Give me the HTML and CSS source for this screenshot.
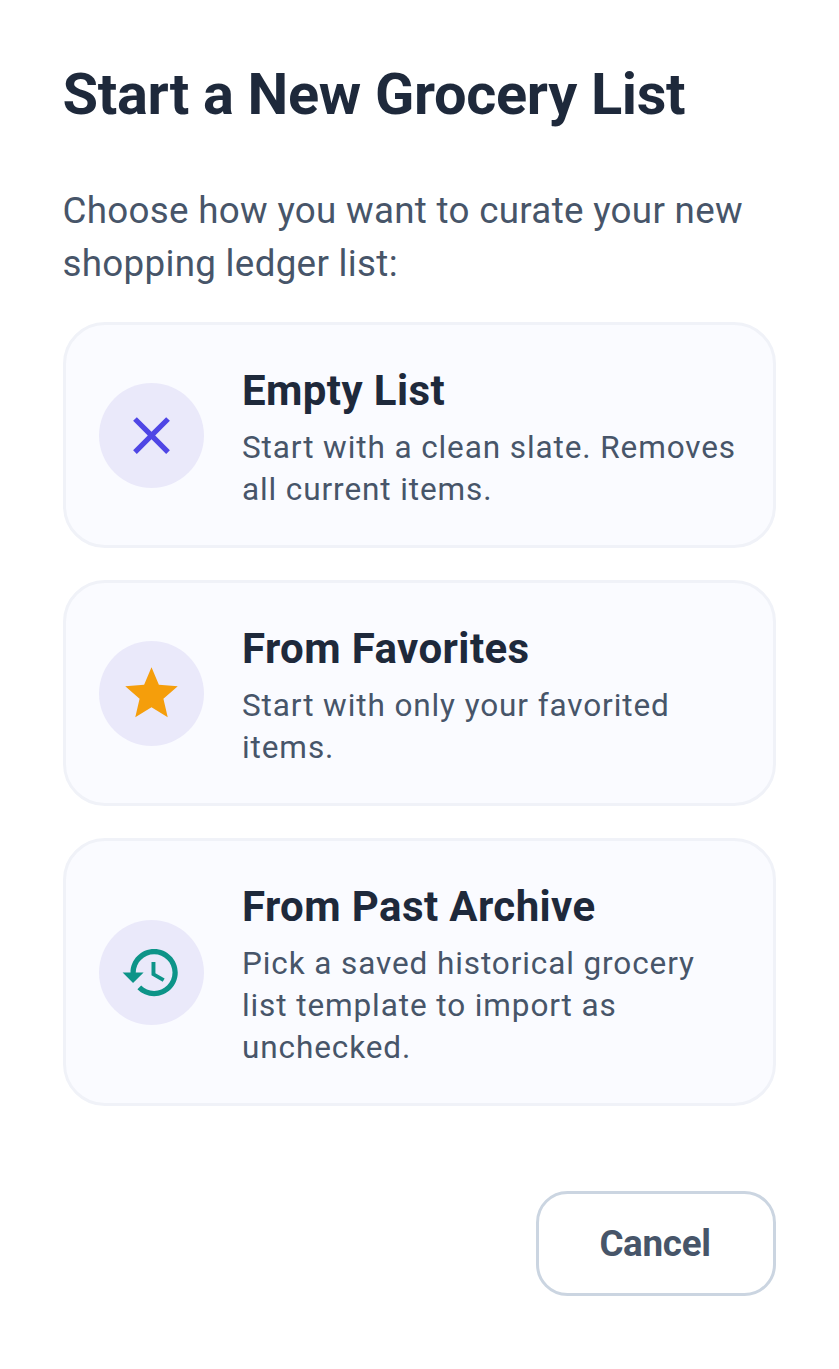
FILE: index.html
```html
<!DOCTYPE html>
<html lang="en">

<head>
    <meta charset="UTF-8">
    <meta name="viewport" content="width=device-width, initial-scale=1.0">
    <title>Start a New Grocery List</title>
    <link rel="stylesheet" href="styles.css">
</head>

<body>
<div class="dialog">
    <h1 class="dialog-title">Start a New Grocery List</h1>
    <p class="dialog-intro">Choose how you want to curate your new shopping ledger list:</p>

    <div class="options">
        <div class="option">
            <div class="option-icon">
                <svg class="icon-close" viewBox="0 0 24 24"><path d="M19 6.41L17.59 5 12 10.59 6.41 5 5 6.41 10.59 12 5 17.59 6.41 19 12 13.41 17.59 19 19 17.59 13.41 12z"/></svg>
            </div>
            <div class="option-text">
                <h2 class="option-title">Empty List</h2>
                <p class="option-desc">Start with a clean slate. Removes all current items.</p>
            </div>
        </div>

        <div class="option">
            <div class="option-icon">
                <svg class="icon-star" viewBox="0 0 24 24"><path d="M12 17.27L18.18 21l-1.64-7.03L22 9.24l-7.19-.61L12 2 9.19 8.63 2 9.24l5.46 4.73L5.82 21z"/></svg>
            </div>
            <div class="option-text">
                <h2 class="option-title">From Favorites</h2>
                <p class="option-desc">Start with only your favorited items.</p>
            </div>
        </div>

        <div class="option">
            <div class="option-icon">
                <svg class="icon-history" viewBox="0 0 24 24"><path d="M13 3c-4.97 0-9 4.03-9 9H1l3.89 3.89.07.14L9 12H6c0-3.87 3.13-7 7-7s7 3.13 7 7-3.13 7-7 7c-1.93 0-3.68-.79-4.94-2.06l-1.42 1.42C8.27 19.99 10.51 21 13 21c4.97 0 9-4.03 9-9s-4.03-9-9-9zm-1 5v5l4.28 2.54.72-1.21-3.5-2.08V8H12z"/></svg>
            </div>
            <div class="option-text">
                <h2 class="option-title">From Past Archive</h2>
                <p class="option-desc">Pick a saved historical grocery list template to import as unchecked.</p>
            </div>
        </div>
    </div>

    <div class="dialog-actions">
        <button class="cancel-btn" type="button">Cancel</button>
    </div>
</div>
</body>

</html>
```

FILE: styles.css
```css
body {
    margin: 0;
    background: #fff;
    font-family: Roboto, "Noto Sans", sans-serif;
}

.dialog {
    padding: 63px 63px 0 63px;
}

.dialog-title {
    margin: 0 0 0 -0.5px;
    font-size: 57.75px;
    line-height: 63px;
    font-weight: 700;
    letter-spacing: -0.33px;
    color: #1e293b;
}

.dialog-intro {
    margin: 58px 0 0 -0.5px;
    font-size: 36.75px;
    line-height: 53px;
    letter-spacing: 0.3px;
    color: #475569;
}

.options {
    display: flex;
    flex-direction: column;
    gap: 32px;
    margin-top: 32px;
}

.option {
    display: flex;
    align-items: center;
    gap: 38px;
    padding: 0 33px;
    border: 3px solid #f0f2f8;
    border-radius: 42px;
    background: #fafbff;
}

.option-icon {
    flex: none;
    display: flex;
    align-items: center;
    justify-content: center;
    width: 105px;
    height: 105px;
    border-radius: 50%;
    background: #eae9fa;
}

.option-icon svg {
    width: 63px;
    height: 63px;
}

.icon-close {
    fill: #4f46e5;
}

.icon-star {
    fill: #f59e0b;
}

.icon-history {
    fill: #0d9488;
}

.option-text {
    padding: 37px 0 34px 0;
}

.option-title {
    margin: 0;
    font-size: 42px;
    line-height: 58px;
    font-weight: 700;
    letter-spacing: 0.4px;
    color: #1e293b;
}

.option-desc {
    margin: 7px 0 0 0;
    font-size: 31.5px;
    line-height: 42px;
    letter-spacing: 0.9px;
    color: #475569;
}

.dialog-actions {
    display: flex;
    justify-content: flex-end;
    margin-top: 85px;
}

.cancel-btn {
    width: 240px;
    height: 105px;
    padding: 0 2px 0 0;
    border: 3px solid #cbd5e1;
    border-radius: 31.5px;
    background: #fff;
    font-family: Roboto, "Noto Sans", sans-serif;
    font-size: 36.75px;
    font-weight: 700;
    letter-spacing: -0.3px;
    color: #475569;
}
```
